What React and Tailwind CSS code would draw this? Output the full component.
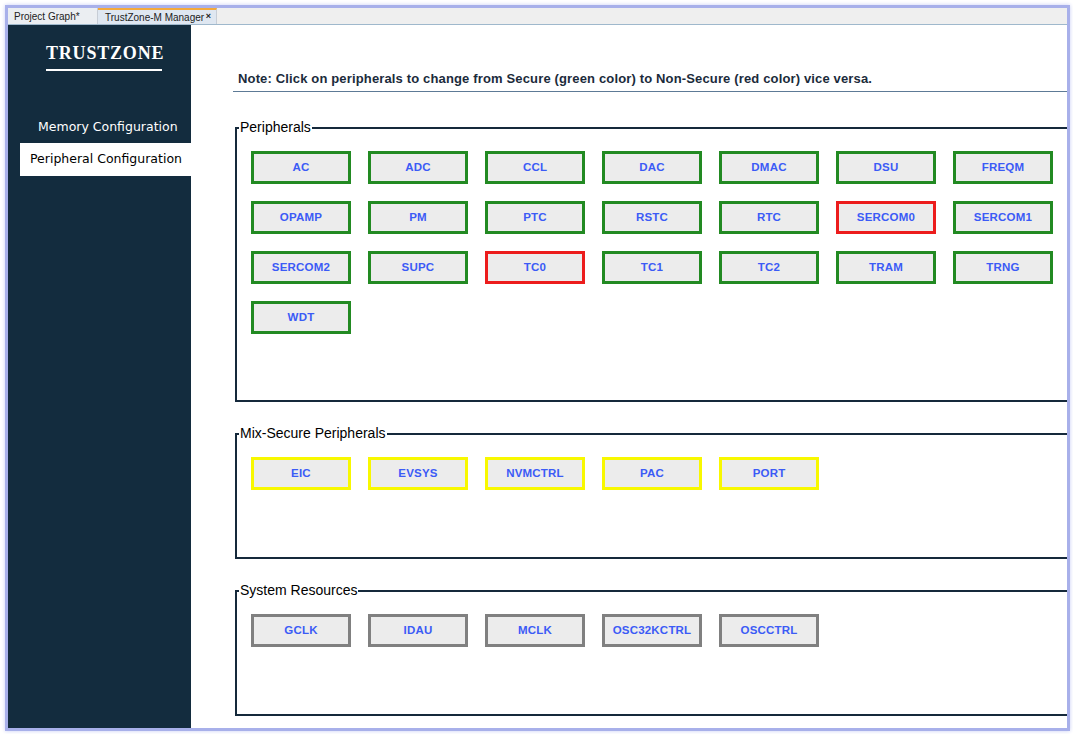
import React from 'react';

const peripherals = [
  ['AC', 'g'], ['ADC', 'g'], ['CCL', 'g'], ['DAC', 'g'], ['DMAC', 'g'], ['DSU', 'g'], ['FREQM', 'g'],
  ['OPAMP', 'g'], ['PM', 'g'], ['PTC', 'g'], ['RSTC', 'g'], ['RTC', 'g'], ['SERCOM0', 'r'], ['SERCOM1', 'g'],
  ['SERCOM2', 'g'], ['SUPC', 'g'], ['TC0', 'r'], ['TC1', 'g'], ['TC2', 'g'], ['TRAM', 'g'], ['TRNG', 'g'],
  ['WDT', 'g'],
];
const mixSecure = ['EIC', 'EVSYS', 'NVMCTRL', 'PAC', 'PORT'];
const systemResources = ['GCLK', 'IDAU', 'MCLK', 'OSC32KCTRL', 'OSCCTRL'];

const borderFor = {
  g: 'border-[#228a22]',
  r: 'border-[#ec1c1c]',
  y: 'border-[#f8f800]',
  s: 'border-[#808080]',
};

function PeriphButton({ name, kind }) {
  return (
    <button
      className={`w-[100px] h-[33px] border-[3px] ${borderFor[kind]} bg-[#ececec] text-[#3b5bf6] text-[11.5px] font-bold tracking-[0.2px] flex items-center justify-center`}
    >
      {name}
    </button>
  );
}

function GroupBox({ title, height, children }) {
  return (
    <fieldset className={`ml-[2px] w-[860px] ${height} border-2 border-[#15293b] pl-[2px]`}>
      <legend className="px-[1px] text-[14px] leading-[17px] text-black">{title}</legend>
      <div className="pl-[12px] pt-[15px] grid grid-cols-[repeat(7,100px)] gap-x-[17px] gap-y-[17px]">
        {children}
      </div>
    </fieldset>
  );
}

export default function App() {
  return (
    <div className="w-[1073px] h-[734px] bg-white pt-[5px] pl-[5px]" style={{ fontFamily: '"Liberation Sans", Arial, sans-serif' }}>
      <div className="w-[1065px] h-[726px] border-[3px] border-[#a8b0ea] shadow-[0_0_4px_#c8cdf4] flex flex-col">
        {/* Tabs */}
        <div className="h-[17px] bg-[#efefef] border-b border-[#9fb8cc] flex text-[10px] text-[#222]">
          <div className="w-[90px] bg-[#ebeef2] border-r border-[#c7cdd6] pl-[6px] flex items-center">Project Graph*</div>
          <div className="w-[119px] bg-[#dfe7f1] border-t-2 border-[#f4a93a] border-r border-r-[#c7cdd6] pl-[7px] pr-[5px] flex items-center justify-between">
            <span>TrustZone-M Manager</span>
            <span className="font-bold text-[9px]">×</span>
          </div>
        </div>

        <div className="flex flex-1 min-h-0">
          {/* Sidebar */}
          <div className="w-[183px] bg-[#132c3e] flex flex-col">
            <div className="ml-[38px] w-[116px] mt-[18px]">
              <div
                className="text-white text-[18px] leading-[20px] font-bold text-center tracking-[0.8px]"
                style={{ fontFamily: '"Liberation Serif", serif' }}
              >
                TRUSTZONE
              </div>
              <div className="h-[2px] bg-white mt-[6px]" />
            </div>
            <div
              className="pl-[30px] mt-[48px] text-white text-[12.5px] leading-[16px]"
              style={{ fontFamily: '"DejaVu Sans", sans-serif' }}
            >
              Memory Configuration
            </div>
            <div
              className="ml-[12px] mt-[8px] h-[33px] bg-white flex items-center pl-[10px] text-black text-[12.5px]"
              style={{ fontFamily: '"DejaVu Sans", sans-serif' }}
            >
              Peripheral Configuration
            </div>
          </div>

          {/* Main */}
          <div className="flex-1 bg-white overflow-hidden pl-[42px]">
            <div className="mt-[46px] h-[21px] border-b border-[#5d7a96] pl-[5px] text-[13px] font-bold tracking-[0.15px] text-[#1b2b3b] leading-[15px]">
              Note: Click on peripherals to change from Secure (green color) to Non-Secure (red color) vice versa.
            </div>
            <div className="mt-[27px]">
              <GroupBox title="Peripherals" height="h-[283px]">
                {peripherals.map(([n, k]) => (
                  <PeriphButton key={n} name={n} kind={k} />
                ))}
              </GroupBox>
            </div>
            <div className="mt-[23px]">
              <GroupBox title="Mix-Secure Peripherals" height="h-[134px]">
                {mixSecure.map((n) => (
                  <PeriphButton key={n} name={n} kind="y" />
                ))}
              </GroupBox>
            </div>
            <div className="mt-[23px]">
              <GroupBox title="System Resources" height="h-[134px]">
                {systemResources.map((n) => (
                  <PeriphButton key={n} name={n} kind="s" />
                ))}
              </GroupBox>
            </div>
          </div>
        </div>
      </div>
    </div>
  );
}
